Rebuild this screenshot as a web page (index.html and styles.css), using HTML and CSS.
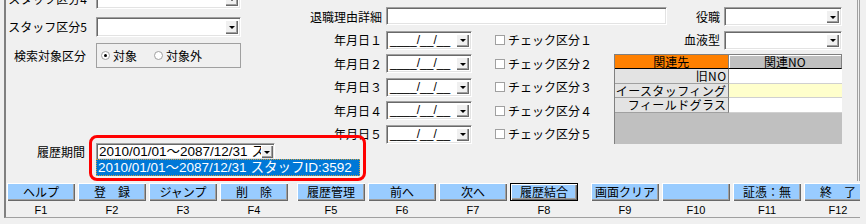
FILE: index.html
```html
<!DOCTYPE html>
<html lang="ja">
<head>
<meta charset="utf-8">
<title>履歴</title>
<link rel="stylesheet" href="styles.css">
</head>
<body>
<div class="window">
  <div class="upper">
    <div class="left">
      <div class="lrow r-staff">
        <span class="lab">スタッフ区分4</span>
        <div class="combo"><span class="txt"></span><span class="dd"></span></div>
      </div>
      <div class="lrow r-staff r-staff5">
        <span class="lab">スタッフ区分5</span>
        <div class="combo"><span class="txt"></span><span class="dd"></span></div>
      </div>
      <div class="lrow r-search">
        <span class="lab">検索対象区分</span>
        <div class="rbox">
          <span class="radio"><span class="rc on"></span>対象</span>
          <span class="radio r2"><span class="rc"></span>対象外</span>
        </div>
      </div>
      <div class="lrow r-rireki">
        <span class="lab">履歴期間</span>
        <div class="rw">
          <div class="combo rcombo"><span class="txt asc">2010/01/01～2087/12/31 スタッフID:3592</span><span class="dd"></span></div>
          <div class="dlist asc">2010/01/01～2087/12/31 スタッフID:3592</div>
          <div class="redbox"></div>
        </div>
      </div>
    </div>

    <div class="main">
      <span class="mlab">退職理由詳細</span>
      <div class="field reason"></div>
      <span class="rlab">役職</span>
      <div class="combo rf"><span class="txt"></span><span class="dd"></span></div>

      <span class="mlab">年月日１</span>
      <div class="combo date"><span class="txt dtxt">____/__/__</span><span class="dd"></span></div>
      <span class="chk"><span class="cb"></span>チェック区分１</span>
      <span class="rlab">血液型</span>
      <div class="combo rf"><span class="txt"></span><span class="dd"></span></div>

      <div class="rel">
        <div class="gh orange">関連先</div>
        <div class="gh">関連NO</div>
        <div class="gl">旧NO</div>
        <div class="gd"></div>
        <div class="gl">イースタッフィング</div>
        <div class="gd y"></div>
        <div class="gl">フィールドグラス</div>
        <div class="gd"></div>
        <div class="gfill"></div>
      </div>

      <span class="mlab">年月日２</span>
      <div class="combo date"><span class="txt dtxt">____/__/__</span><span class="dd"></span></div>
      <span class="chk"><span class="cb"></span>チェック区分２</span>

      <span class="mlab">年月日３</span>
      <div class="combo date"><span class="txt dtxt">____/__/__</span><span class="dd"></span></div>
      <span class="chk"><span class="cb"></span>チェック区分３</span>

      <span class="mlab">年月日４</span>
      <div class="combo date"><span class="txt dtxt">____/__/__</span><span class="dd"></span></div>
      <span class="chk"><span class="cb"></span>チェック区分４</span>

      <span class="mlab">年月日５</span>
      <div class="combo date"><span class="txt dtxt">____/__/__</span><span class="dd"></span></div>
      <span class="chk"><span class="cb"></span>チェック区分５</span>
    </div>
  </div>

  <div class="fbar">
    <div class="grp">
      <div class="fk"><div class="fbtn">ヘルプ</div><div class="fl">F1</div></div>
      <div class="fk"><div class="fbtn">登　録</div><div class="fl">F2</div></div>
      <div class="fk"><div class="fbtn">ジャンプ</div><div class="fl">F3</div></div>
      <div class="fk"><div class="fbtn">削　除</div><div class="fl">F4</div></div>
    </div>
    <div class="grp g2">
      <div class="fk"><div class="fbtn">履歴管理</div><div class="fl">F5</div></div>
      <div class="fk"><div class="fbtn">前へ</div><div class="fl">F6</div></div>
      <div class="fk"><div class="fbtn">次へ</div><div class="fl">F7</div></div>
      <div class="fk"><div class="fbtn def">履歴結合</div><div class="fl">F8</div></div>
    </div>
    <div class="grp g3">
      <div class="fk"><div class="fbtn">画面クリア</div><div class="fl">F9</div></div>
      <div class="fk"><div class="fbtn"></div><div class="fl">F10</div></div>
      <div class="fk"><div class="fbtn">証憑：無</div><div class="fl">F11</div></div>
      <div class="fk"><div class="fbtn">終　了</div><div class="fl">F12</div></div>
    </div>
  </div>
</div>
</body>
</html>
```

FILE: styles.css
```css
* { box-sizing: border-box; }
html, body { margin: 0; padding: 0; }
body {
  background: #f0f0f0;
  width: 866px;
  height: 224px;
  overflow: hidden;
  font-family: "Noto Sans CJK JP", "Noto Sans", sans-serif;
  font-size: 12px;
  line-height: 14px;
  color: #000;
}

.window {
  margin-left: 4px;
  width: 856px;
  height: 218px;
  border-left: 2px solid #808080;
  border-bottom: 1px solid #a0a0a0;
  display: flex;
  flex-direction: column;
  overflow: hidden;
}

.upper {
  flex: 0 0 181px;
  width: 854px;
  display: flex;
  align-items: flex-start;
  border-right: 3px double #a0a0a0;
}

/* left column */
.left {
  width: 235px;
  flex: none;
  margin-top: -11px;
  display: flex;
  flex-direction: column;
}
.lrow {
  display: grid;
  grid-template-columns: 81px 145px;
  column-gap: 9px;
  align-items: center;
}
.lab { text-align: right; white-space: nowrap; }
.r-staff .combo { height: 20px; }
.r-staff5 { margin-top: 8px; }
.r-search { margin-top: 6px; }
.r-search .lab { padding-right: 1px; }
.r-rireki { margin-top: 75px; grid-template-columns: 81px 179px; }
.r-rireki .lab { padding-right: 2px; }

/* combobox */
.combo {
  display: flex;
  background: #fff;
  border: 1px solid;
  border-color: #a0a0a0 #fff #fff #a0a0a0;
  box-shadow: inset 1px 1px 0 #696969, inset -1px -1px 0 #e3e3e3;
  height: 19px;
  padding: 1px;
}
.combo .txt {
  flex: 1;
  min-width: 0;
  overflow: hidden;
  white-space: nowrap;
  line-height: 15px;
  padding-left: 2px;
}
.dd {
  flex: 0 0 13px;
  margin: 1px 1px 1px 0;
  background: #f0f0f0;
  box-shadow: inset 1px 1px 0 #fff, inset -1px -1px 0 #696969, inset -2px -2px 0 #a0a0a0;
  display: flex;
  align-items: center;
  justify-content: center;
}
.dd::after {
  content: "";
  width: 0;
  height: 0;
  margin-top: 1px;
  border-left: 3px solid transparent;
  border-right: 3px solid transparent;
  border-top: 3px solid #000;
}
.field {
  background: #fff;
  border: 1px solid;
  border-color: #a0a0a0 #fff #fff #a0a0a0;
  box-shadow: inset 1px 1px 0 #696969, inset -1px -1px 0 #e3e3e3;
}

/* radio group */
.rbox {
  height: 25px;
  border: 1px solid #a0a0a0;
  display: flex;
  align-items: center;
  padding-left: 4px;
}
.radio { display: inline-flex; align-items: center; }
.radio.r2 { margin-left: 17px; }
.rc {
  width: 9px;
  height: 9px;
  border-radius: 50%;
  border: 1px solid #a0a0a0;
  background: #fff;
  margin-right: 3px;
  display: flex;
  align-items: center;
  justify-content: center;
}
.rc.on::after {
  content: "";
  width: 3px;
  height: 3px;
  border-radius: 50%;
  background: #000;
}

/* rireki combo + open list */
.rw { position: relative; width: 179px; }
.asc { font-family: "Liberation Sans", "Noto Sans CJK JP", sans-serif; font-size: 13.5px; }
.rcombo { height: 17px; }
.rcombo .txt { line-height: 13px; padding-left: 1px; }
.rcombo .dd { margin: 0; flex-basis: 12px; }
.dlist {
  position: absolute;
  left: 0;
  top: 16px;
  width: 264px;
  height: 17px;
  background: #0078d7;
  color: #fff;
  border: 1px dotted #d0a040;
  padding-left: 1px;
  white-space: nowrap;
  overflow: hidden;
  line-height: 15px;
  z-index: 1;
}
.redbox {
  position: absolute;
  left: -7px;
  top: -8px;
  width: 277px;
  height: 46px;
  border: 3px solid #ff0000;
  border-radius: 8px;
  z-index: 2;
}

/* main grid */
.main {
  flex: none;
  margin-top: 7px;
  display: grid;
  grid-template-columns: 145px 86px 142px 110px 118px;
  grid-template-rows: repeat(6, 19px);
  row-gap: 4.5px;
}
.mlab {
  grid-column: 1;
  justify-self: end;
  align-self: center;
  padding-right: 4px;
  white-space: nowrap;
}
.reason { grid-column: 2 / 4; width: 281px; height: 18px; justify-self: start; }
.date { grid-column: 2; }
.dtxt { font-family: "Liberation Sans", sans-serif; font-size: 12px; }
.chk {
  grid-column: 3;
  display: flex;
  align-items: center;
  padding-left: 23px;
  white-space: nowrap;
}
.cb {
  width: 10px;
  height: 10px;
  border: 1px solid #a0a0a0;
  background: #fff;
  margin-right: 3px;
}
.rlab {
  grid-column: 4;
  justify-self: end;
  align-self: center;
  padding-right: 4px;
}
.rf { grid-column: 5; }

/* related grid */
.rel {
  grid-column: 4 / 6;
  grid-row: 3 / 7;
  display: grid;
  grid-template-columns: 1fr 1fr;
  grid-template-rows: 14px 15px 14px 15px 1fr;
  background: #c0c0c0;
  border-left: 1px solid #808080;
  border-top: 1px solid #808080;
}
.gh {
  background: #c0c0c0;
  text-align: center;
  line-height: 13px;
  border-right: 1px solid #808080;
  border-bottom: 1px solid #000;
  box-shadow: inset 1px 1px 0 #fff;
}
.gh.orange { background: #ff8000; box-shadow: none; }
.gl {
  background: #e3e3e3;
  text-align: right;
  line-height: 13px;
  padding-right: 1px;
  letter-spacing: 0.4px;
  border-right: 1px solid #808080;
  border-bottom: 1px solid #a0a0a0;
  white-space: nowrap;
  overflow: hidden;
}
.gd { background: #fff; border-bottom: 1px solid #d0d0d0; }
.gd.y { background: #ffffcc; }
.gfill { grid-column: 1 / 3; }

/* function key bar */
.fbar {
  flex: none;
  display: flex;
  padding: 2px 0 0 1px;
}
.grp { display: flex; gap: 3px; flex: none; }
.grp.g2 { margin-left: 9px; }
.grp.g3 { margin-left: 13px; }
.fk { width: 68px; flex: none; display: flex; flex-direction: column; }
.fbtn {
  height: 18px;
  background: #99ccff;
  box-shadow: inset 1px 1px 0 #fff, inset -1px -1px 0 #696969, inset -2px -2px 0 #a0a0a0;
  text-align: center;
  line-height: 18px;
  white-space: nowrap;
}
.fbtn.def { border: 1px solid #000; line-height: 16px; }
.fl {
  margin-top: 2px;
  text-align: center;
  font-family: "Liberation Sans", sans-serif;
  font-size: 11px;
  line-height: 14px;
}
```
